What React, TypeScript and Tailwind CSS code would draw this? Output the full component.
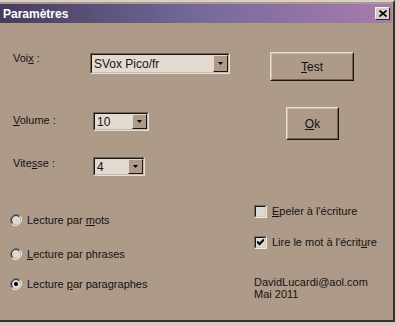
import React from "react";

function Combo({ cls, value }: { cls: string; value: string }) {
  return (
    <div className={`${cls} border border-t-[#6e6257] border-l-[#6e6257] border-b-[#e6dfd7] border-r-[#e6dfd7]`}>
      <div className="h-full flex border border-t-[#1b1612] border-l-[#1b1612] border-b-[#c7bbaf] border-r-[#c7bbaf] bg-[#e3dad1]">
        <span className="flex-1 pl-[2px] flex items-center leading-none text-[12px]">{value}</span>
        <div className="w-[15px] h-full bg-[#ad9a89] border border-t-[#e2dad1] border-l-[#e2dad1] border-b-[#1b1612] border-r-[#1b1612] flex items-center justify-center">
          <svg width="5" height="3" viewBox="0 0 5 3">
            <path d="M0 0h5L2.5 3z" fill="#000" />
          </svg>
        </div>
      </div>
    </div>
  );
}

function Btn({ cls, children }: { cls: string; children: React.ReactNode }) {
  return (
    <div className={`${cls} border border-t-[#e6dfd7] border-l-[#e6dfd7] border-b-[#1b1612] border-r-[#1b1612]`}>
      <div className="h-full flex items-center justify-center border border-t-[#c8bcb0] border-l-[#c8bcb0] border-b-[#6e6257] border-r-[#6e6257] text-[12px]">
        {children}
      </div>
    </div>
  );
}

function Radio({ checked, children, cls }: { checked?: boolean; children: React.ReactNode; cls: string }) {
  return (
    <div className={`${cls} flex items-center h-[12px] ml-[10px]`}>
      <svg width="12" height="12" viewBox="0 0 12 12">
        <path d="M10.2 1.8A6 6 0 0 0 1.8 10.2" stroke="#7a6f65" strokeWidth="1" fill="none" />
        <path d="M1.8 10.2A6 6 0 0 0 10.2 1.8" stroke="#f0ebe5" strokeWidth="1" fill="none" />
        <circle cx="6" cy="6" r="4.6" fill="#dcd8d3" />
        <path d="M9.2 2.8A4.5 4.5 0 0 0 2.8 9.2" stroke="#2a231d" strokeWidth="1" fill="none" />
        {checked && <circle cx="6" cy="6" r="2" fill="#000" />}
      </svg>
      <span className="ml-[5px] leading-[12px] whitespace-nowrap">{children}</span>
    </div>
  );
}

function Check({ checked, children, cls }: { checked?: boolean; children: React.ReactNode; cls: string }) {
  return (
    <div className={`${cls} flex items-center h-[13px]`}>
      <div className="w-[13px] h-[13px] border border-t-[#7a6f65] border-l-[#7a6f65] border-b-[#f0ebe5] border-r-[#f0ebe5]">
        <div className="w-full h-full bg-[#dcd8d3] border border-t-[#1b1612] border-l-[#1b1612] border-b-[#cfc8c0] border-r-[#cfc8c0] flex items-center justify-center">
          {checked && (
            <svg width="7" height="7" viewBox="0 0 7 7">
              <path d="M0 2.5l2.5 2.5L7 0.5" stroke="#000" strokeWidth="2" fill="none" />
            </svg>
          )}
        </div>
      </div>
      <span className="ml-[5px] leading-[13px] whitespace-nowrap">{children}</span>
    </div>
  );
}

export default function App() {
  return (
    <div className="w-[397px] h-[325px] bg-[#d5cdc3] overflow-hidden font-['Liberation_Sans',Arial,sans-serif] text-[11px] text-[#161210]">
      <div className="w-[395px] h-[322px] bg-[#ad9a89] border-t-2 border-t-[#d8d0c6] border-r-2 border-r-[#3a312a] border-b-2 border-b-[#3a312a] pt-[2px] pr-[1px] flex flex-col">
        {/* Title bar */}
        <div className="h-[19px] flex items-center justify-between bg-gradient-to-r from-[#463c5c] via-[#74699a] to-[#a97cae]">
          <span className="pl-[3px] text-white font-bold text-[12px] leading-none">Paramètres</span>
          <div className="mr-[2px] w-[15px] h-[13px] bg-[#d4d0c8] border border-t-[#f4f1ec] border-l-[#f4f1ec] border-b-[#2b2520] border-r-[#2b2520] flex items-center justify-center">
            <svg width="8" height="7" viewBox="0 0 8 7">
              <path d="M0.5 0.5L7.5 6.5M7.5 0.5L0.5 6.5" stroke="#000" strokeWidth="1.6" />
            </svg>
          </div>
        </div>

        {/* Content */}
        <div className="flex flex-1">
          {/* Left column */}
          <div className="w-[254px] flex flex-col">
            <div className="mt-[30px] ml-[13px] flex items-start">
              <span className="w-[77px] leading-[13px] mt-[-1px]">
                Voi<u>x</u> :
              </span>
              <Combo cls="w-[140px] h-[21px]" value="SVox Pico/fr" />
            </div>
            <div className="mt-[38px] ml-[13px] flex items-start">
              <span className="w-[80px] leading-[13px] mt-[2px]">
                <u>V</u>olume :
              </span>
              <Combo cls="w-[56px] h-[19px]" value="10" />
            </div>
            <div className="mt-[26px] ml-[13px] flex items-start">
              <span className="w-[80px] leading-[13px] mt-[0px]">
                Vite<u>s</u>se :
              </span>
              <Combo cls="w-[52px] h-[19px]" value="4" />
            </div>
            <Radio cls="mt-[38px]">
              Lecture par <u>m</u>ots
            </Radio>
            <Radio cls="mt-[22px]">
              <u>L</u>ecture par phrases
            </Radio>
            <Radio cls="mt-[18px]" checked>
              Lecture <u>p</u>ar paragraphes
            </Radio>
          </div>

          {/* Right column */}
          <div className="flex flex-col">
            <Btn cls="mt-[29px] ml-[16px] w-[84px] h-[29px]">
              <span>
                <u>T</u>est
              </span>
            </Btn>
            <Btn cls="mt-[26px] ml-[32px] w-[53px] h-[33px]">
              <span>
                <u>O</u>k
              </span>
            </Btn>
            <Check cls="mt-[65px]">
              <u>E</u>peler à l'écriture
            </Check>
            <Check cls="mt-[18px]" checked>
              Lire le mot à l'écrit<u>u</u>re
            </Check>
            <div className="mt-[27px] leading-[12px] flex flex-col">
              <span>DavidLucardi@aol.com</span>
              <span>Mai 2011</span>
            </div>
          </div>
        </div>
      </div>
    </div>
  );
}
